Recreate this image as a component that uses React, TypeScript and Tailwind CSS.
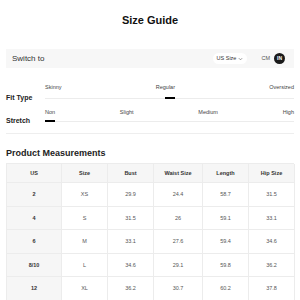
import React from 'react';

const rows = [
  ['2', 'XS', '29.9', '24.4', '58.7', '31.5'],
  ['4', 'S', '31.5', '26', '59.1', '33.1'],
  ['6', 'M', '33.1', '27.6', '59.4', '34.6'],
  ['8/10', 'L', '34.6', '29.1', '59.8', '36.2'],
  ['12', 'XL', '36.2', '30.7', '60.2', '37.8'],
];

const headers = ['US', 'Size', 'Bust', 'Waist Size', 'Length', 'Hip Size'];

const ScaleRow: React.FC<{ label: string; marks: string[]; left: string; gap: string; labelGap: string }> = ({
  label,
  marks,
  left,
  gap,
  labelGap,
}) => (
  <div className={`flex items-end ${gap}`}>
    <div className="w-[39px] text-[7px] font-bold leading-[8px] text-[#222] mb-[-2px]">{label}</div>
    <div className="flex-1 flex flex-col">
      <div className="flex justify-between text-[5.5px] leading-[7px] text-[#444]">
        {marks.map((m) => (
          <span key={m}>{m}</span>
        ))}
      </div>
      <div className={`relative h-[3px] ${labelGap}`}>
        <div className="absolute left-0 right-0 top-[1px] h-px bg-[#ececec]" />
        <div className={`absolute top-0 h-[2px] w-[10px] bg-black ${left}`} />
      </div>
    </div>
  </div>
);

export default function App() {
  return (
    <div className="w-[300px] h-[300px] overflow-hidden bg-white px-[6px] font-['Liberation_Sans',Arial,sans-serif]">
      <div className="h-[40px] flex items-center justify-center text-[11px] font-bold text-[#111]">Size Guide</div>

      <div className="mt-[9px] h-[19px] bg-[#f7f7f7] flex items-center justify-between pl-[6px] pr-[9px]">
        <span className="text-[8px] text-[#333]">Switch to</span>
        <div className="flex items-center">
          <div className="h-[11px] px-[4px] rounded-full bg-white flex items-center gap-[2px] text-[5.5px] text-[#333]">
            US Size
            <svg width="5" height="4" viewBox="0 0 6 4" fill="none" stroke="#666" strokeWidth="0.8">
              <path d="M1 1l2 2 2-2" />
            </svg>
          </div>
          <span className="ml-[14px] text-[5.5px] text-[#555]">CM</span>
          <div className="ml-[4px] w-[11px] h-[11px] rounded-full bg-[#1a1a1a] text-white text-[5px] font-bold flex items-center justify-center">
            IN
          </div>
        </div>
      </div>

      <ScaleRow
        label="Fit Type"
        marks={['Skinny', 'Regular', 'Oversized']}
        left="left-[120px]"
        gap="mt-[16px]"
        labelGap="mt-[6px]"
      />
      <ScaleRow
        label="Stretch"
        marks={['Non', 'Slight', 'Medium', 'High']}
        left="left-0"
        gap="mt-[9px]"
        labelGap="mt-[4px]"
      />

      <div className="mt-[10px] h-px bg-[#eeeeee]" />

      <div className="mt-[13px] text-[9px] font-bold leading-[12px] text-[#222]">Product Measurements</div>

      <div className="mt-[4px] grid grid-cols-[55px_46px_46px_49px_46px_46px] border-l border-t border-[#ececec] text-[5.5px]">
        {headers.map((h) => (
          <div
            key={h}
            className="h-[19px] flex items-center justify-center bg-[#f6f6f6] border-r border-b border-[#ececec] font-bold text-[#333]"
          >
            {h}
          </div>
        ))}
        {rows.map((r) =>
          r.map((c, i) => (
            <div
              key={r[0] + i}
              className={`h-[23.5px] flex items-center justify-center border-r border-b border-[#ececec] ${
                i === 0 ? 'bg-[#f6f6f6] font-bold text-[#333]' : 'bg-white text-[#555]'
              }`}
            >
              {c}
            </div>
          ))
        )}
      </div>
    </div>
  );
}
